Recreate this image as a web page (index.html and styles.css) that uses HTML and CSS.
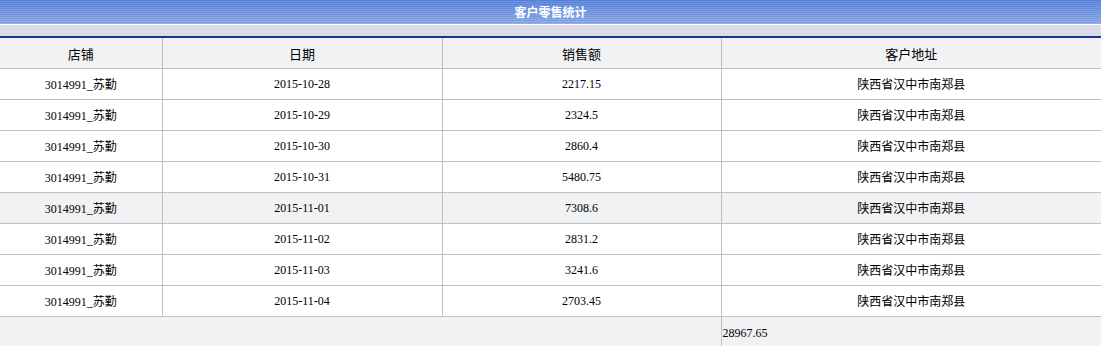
FILE: index.html
```html
<!DOCTYPE html>
<html lang="zh">
<head>
<meta charset="utf-8">
<title>客户零售统计</title>
<link rel="stylesheet" href="styles.css">
</head>
<body>
<div class="title">客户零售统计</div>
<div class="band"></div>
<table class="grid">
  <colgroup>
    <col class="c1"><col class="c2"><col class="c3"><col class="c4">
  </colgroup>
  <thead>
    <tr><th>店铺</th><th>日期</th><th>销售额</th><th>客户地址</th></tr>
  </thead>
  <tbody>
    <tr><td>3014991_苏勤</td><td>2015-10-28</td><td>2217.15</td><td>陕西省汉中市南郑县</td></tr>
    <tr><td>3014991_苏勤</td><td>2015-10-29</td><td>2324.5</td><td>陕西省汉中市南郑县</td></tr>
    <tr><td>3014991_苏勤</td><td>2015-10-30</td><td>2860.4</td><td>陕西省汉中市南郑县</td></tr>
    <tr><td>3014991_苏勤</td><td>2015-10-31</td><td>5480.75</td><td>陕西省汉中市南郑县</td></tr>
    <tr class="hl"><td>3014991_苏勤</td><td>2015-11-01</td><td>7308.6</td><td>陕西省汉中市南郑县</td></tr>
    <tr><td>3014991_苏勤</td><td>2015-11-02</td><td>2831.2</td><td>陕西省汉中市南郑县</td></tr>
    <tr><td>3014991_苏勤</td><td>2015-11-03</td><td>3241.6</td><td>陕西省汉中市南郑县</td></tr>
    <tr><td>3014991_苏勤</td><td>2015-11-04</td><td>2703.45</td><td>陕西省汉中市南郑县</td></tr>
  </tbody>
  <tfoot>
    <tr><td class="blank" colspan="3"></td><td class="total">28967.65</td></tr>
  </tfoot>
</table>
</body>
</html>
```
FILE: styles.css
```css
html, body {
  margin: 0;
  padding: 0;
  background: #f1f2f4;
}
body {
  font-family: "Liberation Serif", "Noto Sans CJK SC", serif;
  font-size: 12px;
  color: #000;
}
.title {
  height: 24px;
  line-height: 24px;
  text-align: center;
  color: #fff;
  font-weight: bold;
  font-size: 12px;
  font-family: "Noto Sans CJK SC", sans-serif;
  background:
    repeating-linear-gradient(to bottom, rgba(255,255,255,0) 0, rgba(255,255,255,0) 1px, rgba(255,255,255,0.12) 1px, rgba(255,255,255,0.12) 2px),
    linear-gradient(to bottom, #5580d8 0%, #6a8fdf 45%, #86a4e6 100%);
  border-bottom: 1px solid #fff;
}
.band {
  height: 11px;
  background: #dcdce8;
  border-bottom: 2px solid #1a3694;
}
.grid {
  width: 100%;
  border-collapse: collapse;
  table-layout: fixed;
}
.c1 { width: 162px; }
.c2 { width: 280px; }
.c3 { width: 279px; }
.grid th, .grid td {
  border: 1px solid #c0c0c0;
  text-align: center;
  padding: 0;
  font-weight: normal;
}
.grid th:first-child, .grid td:first-child { border-left: none; }
.grid th:last-child, .grid td:last-child { border-right: none; }
.grid thead th {
  height: 30px;
  background: #f1f2f4;
  border-top: none;
  font-family: "Noto Sans CJK SC", sans-serif;
  font-size: 13px;
}
.grid tbody td {
  height: 30px;
  background: #fff;
}
.grid tbody tr.hl td { background: #f1f2f4; }
.grid tfoot td {
  height: 29px;
  background: #f1f2f4;
  border-bottom: none;
}
.grid tfoot td.blank { border-left: none; }
.grid tfoot td.total {
  text-align: left;
  padding: 2px 0 0 1px;
  vertical-align: middle;
}
```
